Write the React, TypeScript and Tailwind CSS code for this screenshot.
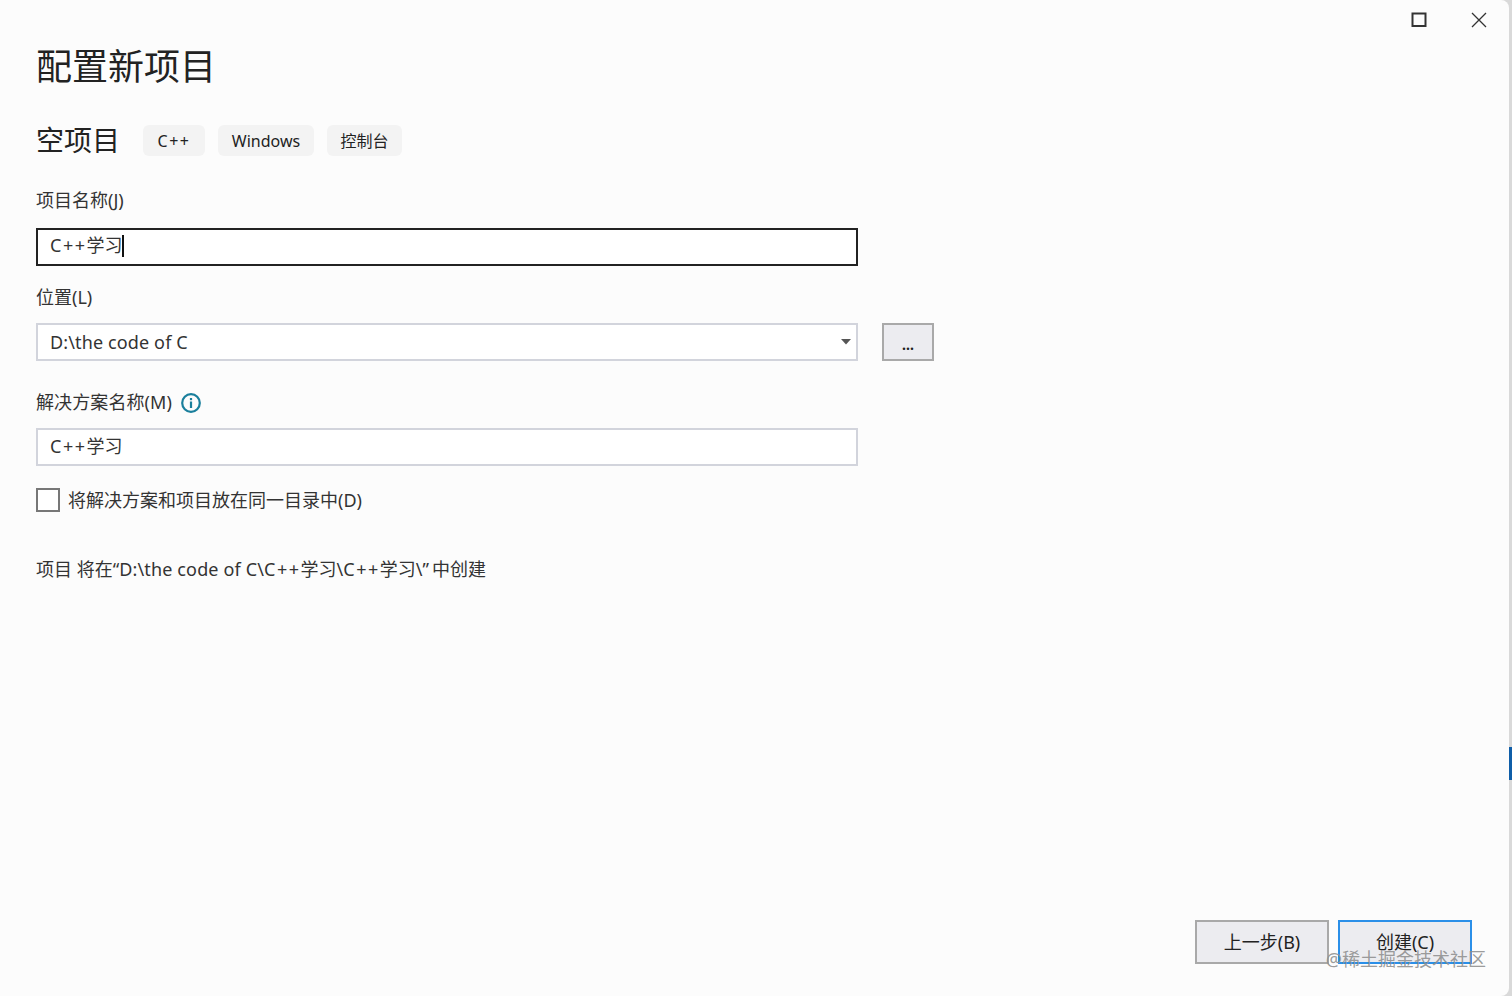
import { useState } from "react";

const FONT = "font-['Noto_Sans','Noto_Sans_CJK_SC',sans-serif]";

function Tag({ label, className }: { label: string; className: string }) {
  return (
    <span
      className={`flex h-[31px] items-center justify-center rounded-[6px] bg-[#f3f3f3] text-[#222] ${className}`}
    >
      {label}
    </span>
  );
}

function CppName() {
  return (
    <>
      <span className="tracking-[1.5px]">C++</span>学习
    </>
  );
}

function TextBox({ focused }: { focused?: boolean }) {
  return (
    <div
      className={
        focused
          ? "flex h-[38px] w-[822px] items-center border-2 border-[#222] bg-white pb-[3px] pl-[12px] text-[18px] text-[#333]"
          : "flex h-[38px] w-[822px] items-center border-2 border-[#d2d4dc] bg-white pb-[2px] pl-[12px] text-[18px] text-[#333]"
      }
    >
      <CppName />
      {focused && <span className="ml-0 h-[22px] w-[2px] bg-[#111]" />}
    </div>
  );
}

export default function App() {
  const [sameDir, setSameDir] = useState(false);

  return (
    <div className={`flex h-[996px] w-[1512px] overflow-hidden bg-[#d9d9d9] ${FONT}`}>
      <div className="relative flex min-w-0 flex-1 flex-col rounded-tr-[8px] rounded-br-[8px] bg-[#fcfcfc] pl-[36px]">
        {/* window controls */}
        <div className="absolute right-[22px] top-[12px] flex items-center gap-[44px]">
          <svg width="16" height="16" viewBox="0 0 16 16" fill="none" stroke="#333" strokeWidth="2">
            <rect x="1.5" y="1.5" width="13" height="12.5" />
          </svg>
          <svg width="16" height="16" viewBox="0 0 16 16" fill="none" stroke="#333" strokeWidth="1.3">
            <path d="M1 1l14 14M15 1L1 15" />
          </svg>
        </div>

        <h1 className="mt-[40px] h-[54px] text-[36px] leading-[54px] text-[#222]">配置新项目</h1>

        <div className="mt-[31px] flex h-[31px] items-center">
          <h2 className="w-[107px] text-[28px] leading-[31px] text-[#222]">空项目</h2>
          <div className="flex items-center gap-[13px] text-[16px]">
            <Tag label="C++" className="w-[62px] tracking-[1.5px]" />
            <Tag label="Windows" className="w-[96px]" />
            <Tag label="控制台" className="w-[75px]" />
          </div>
        </div>

        <label className="mt-[31px] h-[27px] text-[18px] leading-[27px] text-[#333]">项目名称(J)</label>
        <div className="mt-[14px]">
          <TextBox focused />
        </div>

        <label className="mt-[18px] h-[27px] text-[18px] leading-[27px] text-[#333]">位置(L)</label>
        <div className="mt-[12px] flex items-center gap-[24px]">
          <div className="flex h-[38px] w-[822px] items-center justify-between border-2 border-[#d2d4dc] bg-white pl-[12px] pr-[5px] text-[18px] tracking-[0.13px] text-[#333]">
            D:\the code of C
            <svg width="10" height="6" viewBox="0 0 10 6" fill="#555">
              <path d="M0 0h10L5 5.5z" />
            </svg>
          </div>
          <button
            type="button"
            className="flex h-[38px] w-[52px] items-end justify-center border-2 border-[#a9a9a9] bg-[#ececf0] pb-[7px] text-[14px] font-bold leading-[14px] text-[#222]"
          >
            ...
          </button>
        </div>

        <div className="mt-[28px] flex h-[27px] items-center gap-[9px] text-[18px] leading-[27px] text-[#333]">
          <label className="tracking-[0.1px]">解决方案名称(M)</label>
          <svg width="20" height="20" viewBox="0 0 20 20" fill="none">
            <circle cx="10" cy="10" r="8.8" stroke="#1a7f9c" strokeWidth="2.2" />
            <rect x="8.9" y="8.5" width="2.2" height="6.5" fill="#1a7f9c" />
            <rect x="8.9" y="5" width="2.2" height="2.2" fill="#1a7f9c" />
          </svg>
        </div>
        <div className="mt-[12px]">
          <TextBox />
        </div>

        <label className="mt-[20px] flex h-[27px] items-center gap-[8px] text-[18px] text-[#333]">
          <input
            type="checkbox"
            checked={sameDir}
            onChange={(e) => setSameDir(e.target.checked)}
            className="h-[24px] w-[24px] appearance-none border-2 border-[#777] bg-white"
          />
          <span className="pt-[2px]">将解决方案和项目放在同一目录中(D)</span>
        </label>

        <p className="mt-[43px] h-[27px] text-[18px] leading-[27px] text-[#333]">
          项目 将在“<span className="tracking-[0.15px]">D:\the code of C\</span>
          <CppName />\<CppName />\”<span className="ml-[3px]">中创建</span>
        </p>

        <div className="mb-[32px] mr-[37px] mt-auto flex justify-end gap-[9px] text-[18px] text-[#222]">
          <button
            type="button"
            className="h-[44px] w-[134px] border-2 border-[#a9a9a9] bg-[#ececf0]"
          >
            上一步(B)
          </button>
          <button
            type="button"
            className="h-[44px] w-[134px] border-2 border-[#2b8fe8] bg-[#ececf0]"
          >
            创建(C)
          </button>
        </div>

        {/* watermark */}
        <span className="absolute bottom-[25px] right-[23px] text-[18px] leading-[24px] text-[#8f8f8f]/90">
          @稀土掘金技术社区
        </span>
      </div>

      <div className="flex w-[3px] shrink-0 flex-col pt-[747px]">
        <div className="h-[33px] w-full bg-[#0f5ea8]" />
      </div>
    </div>
  );
}
